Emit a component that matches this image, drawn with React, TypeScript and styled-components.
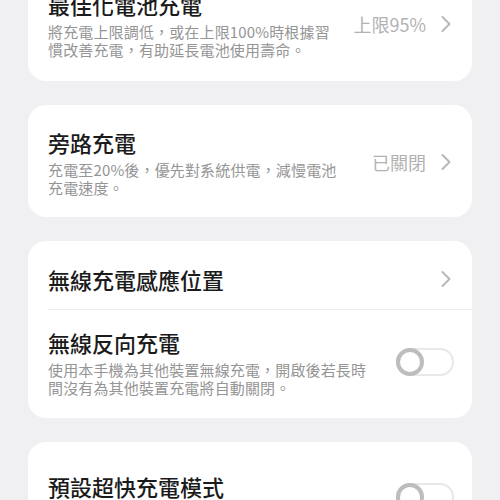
import React from "react";
import styled, { createGlobalStyle } from "styled-components";

const Global = createGlobalStyle`
  html, body {
    margin: 0;
    padding: 0;
    height: 500px;
    overflow: hidden;
    background: #f0f0f2;
  }
  body {
    font-family: "Noto Sans CJK TC", "Noto Sans", sans-serif;
    -webkit-font-smoothing: antialiased;
  }
`;

const Page = styled.div`
  display: flex;
  flex-direction: column;
  gap: 24px;
  padding: 0 28px;
  margin-top: -33px;
`;

const Card = styled.section`
  background: #ffffff;
  border-radius: 18px;
  display: flex;
  flex-direction: column;
`;

const Row = styled.div<{ $pt: number; $pb: number; $pr?: number }>`
  display: flex;
  align-items: center;
  padding: ${(p) => p.$pt}px ${(p) => p.$pr ?? 20}px ${(p) => p.$pb}px 20px;
`;

const TextCol = styled.div<{ $maxW?: number }>`
  display: flex;
  flex-direction: column;
  gap: 4px;
  flex: 1 1 auto;
  max-width: ${(p) => (p.$maxW ? `${p.$maxW}px` : "none")};
`;

const Title = styled.div`
  font-size: 22px;
  line-height: 30px;
  font-weight: 500;
  color: #1b1b1b;
`;

const Sub = styled.div`
  font-size: 15px;
  line-height: 18px;
  letter-spacing: 0.15px;
  color: #959595;
`;

const Right = styled.div`
  margin-left: auto;
  display: flex;
  align-items: center;
  gap: 14px;
  flex-shrink: 0;
`;

const Value = styled.span`
  font-size: 18px;
  line-height: 24px;
  color: #b2b2b2;
`;

const Divider = styled.div`
  height: 1px;
  margin-left: 20px;
  background: #ededed;
`;

const Track = styled.div`
  position: relative;
  box-sizing: border-box;
  width: 58px;
  height: 28px;
  border: 2px solid #e8e8e8;
  border-radius: 14px;
  background: #fff;
`;

const Knob = styled.div`
  position: absolute;
  top: -2px;
  left: -2px;
  box-sizing: border-box;
  width: 28px;
  height: 28px;
  border-radius: 50%;
  border: 4px solid #bdbdbd;
  background: #fff;
`;

const Chevron = () => (
  <svg width="12" height="18" viewBox="0 0 12 18" fill="none">
    <path
      d="M2.5 2 L9.5 9 L2.5 16"
      stroke="#b7b7b7"
      strokeWidth="2"
      strokeLinecap="round"
      strokeLinejoin="round"
    />
  </svg>
);

const Toggle = () => (
  <Track>
    <Knob />
  </Track>
);

export default function App() {
  return (
    <>
      <Global />
      <Page>
        <Card>
          <Row $pt={22} $pb={22}>
            <TextCol $maxW={296}>
              <Title>最佳化電池充電</Title>
              <Sub>將充電上限調低，或在上限100%時根據習慣改善充電，有助延長電池使用壽命。</Sub>
            </TextCol>
            <Right>
              <Value>上限95%</Value>
              <Chevron />
            </Right>
          </Row>
        </Card>

        <Card>
          <Row $pt={22} $pb={20}>
            <TextCol $maxW={296}>
              <Title>旁路充電</Title>
              <Sub>充電至20%後，優先對系統供電，減慢電池充電速度。</Sub>
            </TextCol>
            <Right>
              <Value>已關閉</Value>
              <Chevron />
            </Right>
          </Row>
        </Card>

        <Card>
          <Row $pt={23} $pb={15}>
            <TextCol>
              <Title>無線充電感應位置</Title>
            </TextCol>
            <Right>
              <Chevron />
            </Right>
          </Row>
          <Divider />
          <Row $pt={17} $pb={21} $pr={18}>
            <TextCol $maxW={326}>
              <Title>無線反向充電</Title>
              <Sub>使用本手機為其他裝置無線充電，開啟後若長時間沒有為其他裝置充電將自動關閉。</Sub>
            </TextCol>
            <Right>
              <Toggle />
            </Right>
          </Row>
        </Card>

        <Card>
          <Row $pt={29} $pb={22} $pr={18}>
            <TextCol $maxW={326}>
              <Title>預設超快充電模式</Title>
              <Sub>充電時預設使用超快充電模式。</Sub>
            </TextCol>
            <Right>
              <Toggle />
            </Right>
          </Row>
        </Card>
      </Page>
    </>
  );
}
